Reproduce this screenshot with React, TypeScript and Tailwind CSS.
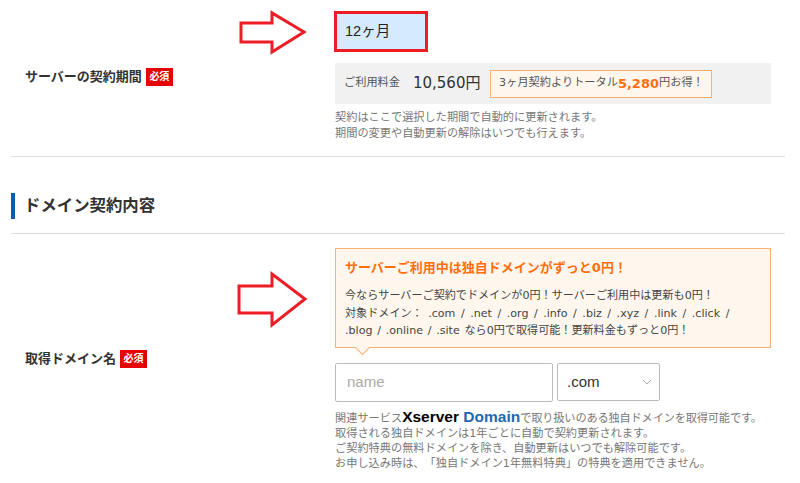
function RequiredBadge() {
  return (
    <span className="inline-flex h-[18px] w-[27px] items-center justify-center bg-[#e60000] text-[10px] font-bold leading-none text-white">
      必須
    </span>
  );
}

function RedArrow({ className, points }: { className: string; points: string }) {
  return (
    <svg className={className} width="72" height="60" viewBox="0 0 72 60" fill="none">
      <polygon points={points} stroke="#ee1c25" strokeWidth="3" fill="#fff" strokeLinejoin="miter" />
    </svg>
  );
}

export default function App() {
  return (
    <div className="relative h-[483px] w-[800px] overflow-hidden bg-white font-['DejaVu_Sans','Noto_Sans_CJK_JP',sans-serif] text-[#333] [text-spacing-trim:space-all]">
      {/* サーバー契約 */}
      <div className="ml-[11px] flex h-[157px] w-[774px] items-center border-b border-[#dddddd]">
        <div className="flex w-[324px] items-center gap-[4px] pb-[3px] pl-[14px]">
          <span className="text-[13px] font-bold text-[#333]">サーバーの契約期間</span>
          <RequiredBadge />
        </div>
        <div className="w-[436px] self-start pt-[11px]">
          <div className="ml-[-1px] flex h-[41px] w-[94px] items-center border-[3px] border-[#ee1c25] bg-[#d6eaff] pl-[8px] font-['Liberation_Sans','Noto_Sans_CJK_JP',sans-serif] text-[14.5px] text-[#222]">
            12ヶ月
          </div>
          <div className="mt-[11px] flex h-[41px] items-center bg-[#f1f1f1] pl-[9px]">
            <span className="text-[11.2px] text-[#555]">ご利用料金</span>
            <span className="ml-[13px] text-[15px] text-[#333]">10,560円</span>
            <div className="ml-[10px] flex h-[28px] w-[222px] items-center justify-center border border-[#ffb06f] bg-[#fff7ee] text-[11.2px] text-[#555]">
              3ヶ月契約よりトータル
              <span className="text-[13px] font-bold text-[#ff6f10]">5,280</span>
              円お得！
            </div>
          </div>
          <p className="mt-[6px] text-[11.2px] leading-[16px] text-[#777]">
            契約はここで選択した期間で自動的に更新されます。
            <br />
            期間の変更や自動更新の解除はいつでも行えます。
          </p>
        </div>
      </div>

      {/* 見出し */}
      <div className="ml-[11px] mt-[36px] h-[41px] w-[774px] border-b border-[#dddddd]">
        <h2 className="h-[26px] border-l-[4px] border-[#0f5ca8] pl-[9px] text-[16.4px] font-bold leading-[26px] text-[#333]">
          ドメイン契約内容
        </h2>
      </div>

      {/* ドメイン */}
      <div className="ml-[11px] flex w-[774px] pt-[14px]">
        <div className="flex w-[324px] items-center gap-[4px] self-start pl-[14px] pt-[101px]">
          <span className="text-[13px] font-bold text-[#333]">取得ドメイン名</span>
          <RequiredBadge />
        </div>
        <div className="w-[436px]">
          <div className="relative h-[100px] border border-[#ffb06f] bg-[#fff7ee] px-[9px] pt-[9px]">
            <p className="text-[13px] font-bold leading-[20px] text-[#ff6f10]">
              サーバーご利用中は独自ドメインがずっと0円！
            </p>
            <p className="mt-[9px] text-[11.1px] leading-[17.5px] text-[#444]">
              今ならサーバーご契約でドメインが0円！サーバーご利用中は更新も0円！
              <br />
              <span className="[word-spacing:2px]">対象ドメイン： .com / .net / .org / .info / .biz / .xyz / .link / .click /</span>
              <br />
              <span className="[word-spacing:1.2px]">.blog / .online / .site なら0円で取得可能！更新料金もずっと0円！</span>
            </p>
            <span className="absolute bottom-[-6px] left-[21px] h-[11px] w-[11px] rotate-45 border-b border-r border-[#ffb06f] bg-[#fff7ee]" />
          </div>
          <div className="mt-[15px] flex gap-[4px] font-['Liberation_Sans',sans-serif] text-[15px]">
            <div className="flex h-[39px] w-[218px] items-center rounded-[2px] border border-[#bbbbbb] pl-[11px] text-[#aaaaaa]">
              name
            </div>
            <div className="flex h-[38px] w-[103px] items-center justify-between rounded-[2px] border border-[#bbbbbb] pl-[9px] pr-[7px] text-[#333]">
              .com
              <svg width="10" height="6" viewBox="0 0 10 6" fill="none">
                <path d="M1 1l4 4 4-4" stroke="#aaaaaa" strokeWidth="1" />
              </svg>
            </div>
          </div>
          <p className="mt-[7px] text-[11.2px] leading-[15px] text-[#777]">
            関連サービス
            <span className="font-['Liberation_Sans',sans-serif] text-[15.5px] font-bold leading-[15px] text-black">Xserver </span>
            <span className="font-['Liberation_Sans',sans-serif] text-[15.5px] font-bold leading-[15px] text-[#1f69ae]">Domain</span>
            <span className="tracking-[-0.15px]">で取り扱いのある独自ドメインを取得可能です。</span>
            <br />
            取得される独自ドメインは1年ごとに自動で契約更新されます。
            <br />
            ご契約特典の無料ドメインを除き、自動更新はいつでも解除可能です。
            <br />
            お申し込み時は、「独自ドメイン1年無料特典」の特典を適用できません。
          </p>
        </div>
      </div>

      <RedArrow className="absolute left-[237px] top-[2px]" points="4,21 35,21 35,11 67,30 35,50 35,40 4,40" />
      <RedArrow className="absolute left-[237px] top-[269px]" points="2,17 35,17 35,5 68,30 35,56 35,44 2,44" />
    </div>
  );
}
